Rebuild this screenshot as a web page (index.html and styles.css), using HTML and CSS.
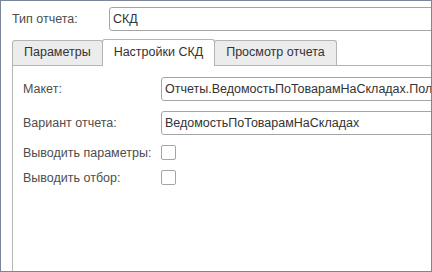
FILE: index.html
```html
<!doctype html>
<html lang="ru">
<head>
    <meta charset="UTF-8">
    <title>Тип отчета</title>
    <link rel="stylesheet" href="styles.css">
</head>
<body>
<div id="form">
    <div class="row top">
        <label class="caption wide">Тип отчета:</label>
        <div class="field">СКД</div>
    </div>
    <ul id="tabs">
        <li>Параметры</li>
        <li class="active">Настройки СКД</li>
        <li>Просмотр отчета</li>
    </ul>
    <div id="page">
        <div class="row">
            <label class="caption">Макет:</label>
            <div class="field">Отчеты.ВедомостьПоТоварамНаСкладах.ПолучитьМакет</div>
        </div>
        <div class="row">
            <label class="caption">Вариант отчета:</label>
            <div class="field">ВедомостьПоТоварамНаСкладах</div>
        </div>
        <div class="row check">
            <label class="caption">Выводить параметры:</label>
            <span class="box"></span>
        </div>
        <div class="row check">
            <label class="caption">Выводить отбор:</label>
            <span class="box"></span>
        </div>
    </div>
</div>
</body>
</html>
```

FILE: styles.css
```css
*{
    margin: 0;
    padding: 0;
    box-sizing: border-box;
}
body{
    font-family: "Liberation Sans", Arial, sans-serif;
    font-size: 12.5px;
    color: #4d4d4d;
    background: #fff;
}
ul{
    list-style: none;
}
#form{
    width: 432px;
    height: 272px;
    border: 1px solid #7b8799;
    padding: 6px 0 0 11px;
    overflow: hidden;
    display: flex;
    flex-direction: column;
}
.row{
    display: flex;
    align-items: center;
    height: 24px;
    margin-bottom: 10px;
    white-space: nowrap;
}
.caption{
    width: 138px;
    flex: none;
}
.caption.wide{
    width: 97px;
}
.field{
    flex: none;
    width: 340px;
    height: 24px;
    line-height: 22px;
    border: 1px solid #a5a5a5;
    border-radius: 3px;
    padding-left: 3px;
    color: #333;
    overflow: hidden;
}
.row.top{
    margin-bottom: 10px;
}
#tabs{
    display: flex;
    align-items: flex-end;
    height: 26px;
    margin-top: -2px;
}
#tabs li{
    height: 25px;
    line-height: 23px;
    padding: 0 11px;
    border: 1px solid #b4b4b4;
    border-bottom: none;
    border-radius: 3px 3px 0 0;
    background: #ececec;
    color: #333;
    margin-right: -1px;
}
#tabs li.active{
    height: 27px;
    line-height: 25px;
    background: #fff;
    position: relative;
    z-index: 1;
    margin-bottom: -1px;
}
#page{
    flex: 1;
    border-left: 1px solid #b4b4b4;
    border-top: 1px solid #b4b4b4;
    padding: 11px 0 0 10px;
}
.row.check{
    height: 15px;
    margin-bottom: 10px;
}
.row.check:first-of-type{
    margin-top: 1px;
}
.box{
    width: 15px;
    height: 15px;
    border: 1px solid #a5a5a5;
    border-radius: 2px;
}
```
